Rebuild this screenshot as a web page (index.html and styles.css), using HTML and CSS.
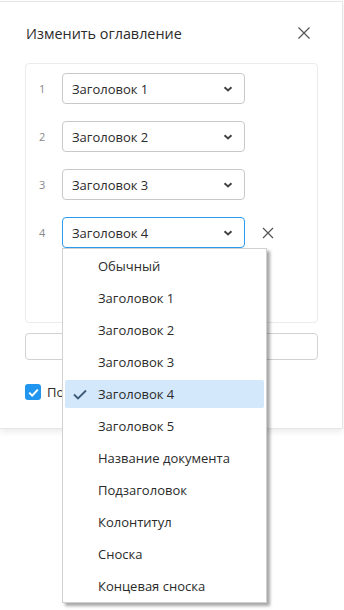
FILE: index.html
```html
<!DOCTYPE html>
<html lang="ru">
<head>
  <meta charset="UTF-8" />
  <meta name="viewport" content="width=device-width, initial-scale=1.0"/>
  <title>Изменить оглавление</title>
  <link rel="stylesheet" href="styles.css">
</head>
<body>
  <div id="dialog">
    <div id="dialog-header">
      <h1 id="dialog-title">Изменить оглавление</h1>
      <button class="icon-button close-button" aria-label="Закрыть">
        <svg width="14" height="14" viewBox="0 0 14 14"><path d="M1.5 1.5l11 11M12.5 1.5l-11 11" stroke="currentColor" stroke-width="1.2" fill="none"/></svg>
      </button>
    </div>

    <div id="levels">
      <div class="level-row">
        <span class="level-num">1</span>
        <div class="level-select">
          <span>Заголовок 1</span>
          <svg class="chevron" width="10" height="6" viewBox="0 0 10 6"><path d="M1.5 1.2l3.5 3.3 3.5-3.3" stroke="currentColor" stroke-width="2" fill="none"/></svg>
        </div>
      </div>
      <div class="level-row">
        <span class="level-num">2</span>
        <div class="level-select">
          <span>Заголовок 2</span>
          <svg class="chevron" width="10" height="6" viewBox="0 0 10 6"><path d="M1.5 1.2l3.5 3.3 3.5-3.3" stroke="currentColor" stroke-width="2" fill="none"/></svg>
        </div>
      </div>
      <div class="level-row">
        <span class="level-num">3</span>
        <div class="level-select">
          <span>Заголовок 3</span>
          <svg class="chevron" width="10" height="6" viewBox="0 0 10 6"><path d="M1.5 1.2l3.5 3.3 3.5-3.3" stroke="currentColor" stroke-width="2" fill="none"/></svg>
        </div>
      </div>
      <div class="level-row">
        <span class="level-num">4</span>
        <div class="level-select active">
          <span>Заголовок 4</span>
          <svg class="chevron" width="10" height="6" viewBox="0 0 10 6"><path d="M1.5 1.2l3.5 3.3 3.5-3.3" stroke="currentColor" stroke-width="2" fill="none"/></svg>
          <ul id="style-menu">
            <li>Обычный</li>
            <li>Заголовок 1</li>
            <li>Заголовок 2</li>
            <li>Заголовок 3</li>
            <li class="selected">
              <svg class="check" width="14" height="11" viewBox="0 0 14 11"><path d="M1 5.5l4 4L13 1.5" stroke="currentColor" stroke-width="1.8" fill="none"/></svg>
              Заголовок 4
            </li>
            <li>Заголовок 5</li>
            <li>Название документа</li>
            <li>Подзаголовок</li>
            <li>Колонтитул</li>
            <li>Сноска</li>
            <li>Концевая сноска</li>
          </ul>
        </div>
        <button class="icon-button remove-button" aria-label="Удалить">
          <svg width="12" height="12" viewBox="0 0 12 12"><path d="M1 1l10 10M11 1L1 11" stroke="currentColor" stroke-width="1.2" fill="none"/></svg>
        </button>
      </div>
    </div>

    <button id="add-level"></button>

    <label id="page-numbers">
      <span class="checkbox">
        <svg width="11" height="9" viewBox="0 0 11 9"><path d="M1.2 4.6l3 3L9.8 1.6" stroke="#fff" stroke-width="2" fill="none"/></svg>
      </span>
      Показать номера страниц
    </label>
  </div>
</body>
</html>
```

FILE: styles.css
```css
* {
  box-sizing: border-box;
  margin: 0;
  padding: 0;
}

html, body {
  min-height: 610px;
}

body {
  font-family: "Open Sans", "Noto Sans", sans-serif;
  background: #fff;
  color: #333;
}

#dialog {
  width: 343px;
  height: 428px;
  margin-top: 1px;
  padding: 0 24px 0 25px;
  background: #fff;
  border: 1px solid #e6e6e6;
  border-left: none;
  box-shadow: 0 3px 6px rgba(0, 0, 0, 0.08);
}

#dialog-header {
  display: flex;
  align-items: center;
  justify-content: space-between;
  height: 61px;
  padding-top: 1px;
}

#dialog-title {
  font-size: 14.4px;
  font-weight: normal;
  color: #2b2b2b;
  padding-left: 1px;
}

.icon-button {
  background: none;
  border: none;
  color: #555;
  display: flex;
  align-items: center;
  justify-content: center;
  cursor: pointer;
}

.close-button {
  width: 20px;
  height: 20px;
  margin-right: 4px;
}

#levels {
  height: 260px;
  border: 1px solid #ebebeb;
  border-radius: 4px;
  padding: 9px 13px;
  display: flex;
  flex-direction: column;
  gap: 17px;
}

.level-row {
  display: flex;
  align-items: center;
  height: 31px;
}

.level-num {
  width: 23px;
  font-size: 11px;
  color: #888;
}

.level-select {
  position: relative;
  width: 183px;
  height: 31px;
  border: 1px solid #c9c9c9;
  border-radius: 4px;
  display: flex;
  align-items: center;
  justify-content: space-between;
  padding: 0 11px 0 9px;
  font-size: 13px;
  color: #2b2b2b;
}

.level-select.active {
  border-color: #2a9bf0;
}

.chevron {
  color: #444;
}

.remove-button {
  width: 14px;
  height: 14px;
  margin-left: 16px;
}

#style-menu {
  position: absolute;
  top: 30px;
  left: -1px;
  width: 205px;
  list-style: none;
  background: #fff;
  border: 1px solid #d0d0d0;
  box-shadow: 3px 3px 3px rgba(0, 0, 0, 0.35);
  padding: 3px 2px 2px;
  display: flex;
  flex-direction: column;
  gap: 4px;
  z-index: 10;
}

#style-menu li {
  position: relative;
  height: 28px;
  padding-left: 33px;
  display: flex;
  align-items: center;
  font-size: 13px;
  color: #2b2b2b;
  border-radius: 2px;
}

#style-menu li.selected {
  background: #d3e8fb;
}

.check {
  position: absolute;
  left: 8px;
  top: 9px;
  color: #3c5a78;
}

#add-level {
  display: block;
  width: 100%;
  height: 27px;
  margin-top: 10px;
  background: #fff;
  border: 1px solid #d2d2d2;
  border-radius: 4px;
}

#page-numbers {
  display: flex;
  align-items: center;
  gap: 6px;
  margin-top: 23px;
  font-size: 13px;
  color: #2b2b2b;
}

.checkbox {
  flex-shrink: 0;
  width: 16px;
  height: 16px;
  border-radius: 3px;
  background: #2196f0;
  display: flex;
  align-items: center;
  justify-content: center;
}
```
